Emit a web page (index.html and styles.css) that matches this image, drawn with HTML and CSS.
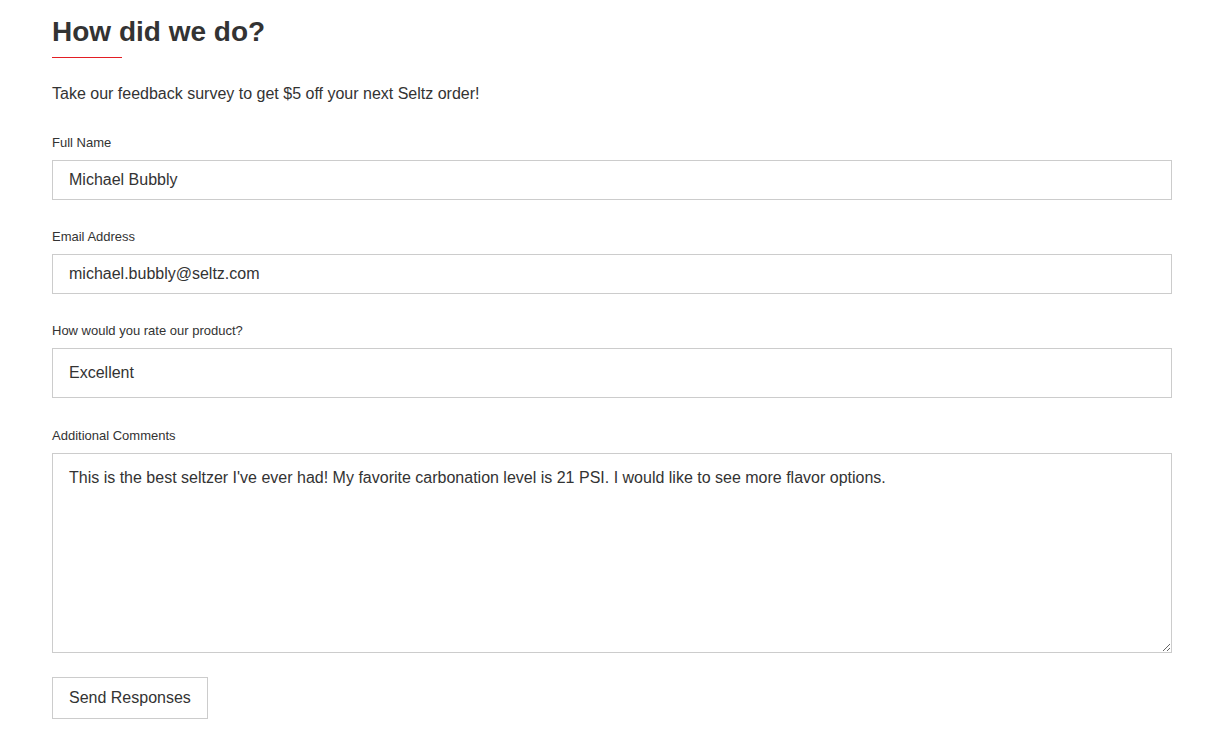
FILE: index.html
```html
<!DOCTYPE html>
<html lang="en">
<head>
<meta charset="utf-8">
<title>How did we do?</title>
<link rel="stylesheet" href="styles.css">
</head>
<body>
<main class="page">
  <h1 class="title">How did we do?</h1>
  <div class="rule"></div>
  <p class="intro">Take our feedback survey to get $5 off your next Seltz order!</p>
  <form class="form">
    <label class="label" for="name">Full Name</label>
    <input class="field" id="name" type="text" value="Michael Bubbly">
    <label class="label" for="email">Email Address</label>
    <input class="field" id="email" type="text" value="michael.bubbly@seltz.com">
    <label class="label" for="rate">How would you rate our product?</label>
    <div class="field field-select" id="rate">Excellent</div>
    <label class="label" for="comments">Additional Comments</label>
    <textarea class="field field-area" id="comments">This is the best seltzer I've ever had! My favorite carbonation level is 21 PSI. I would like to see more flavor options.</textarea>
    <button class="button" type="button">Send Responses</button>
  </form>
</main>
</body>
</html>
```
FILE: styles.css
```css
* { box-sizing: border-box; }
html, body { margin: 0; background: #fff; }
body {
  font-family: "Liberation Sans", Arial, sans-serif;
  color: #333;
}
.page {
  width: 1120px;
  margin-left: 52px;
  padding-top: 16px;
}
.title {
  margin: 0;
  font-size: 28px;
  line-height: 32px;
  font-weight: bold;
  color: #333;
}
.rule {
  width: 70px;
  height: 1px;
  background: #e31e24;
  margin-top: 9px;
}
.intro {
  margin: 27px 0 0;
  font-size: 16px;
  line-height: 18px;
}
.form {
  display: flex;
  flex-direction: column;
  align-items: flex-start;
}
.label {
  display: block;
  font-size: 13px;
  line-height: 14px;
  margin-top: 30px;
  margin-bottom: 10px;
}
.intro + .form .label:first-child { margin-top: 33px; }
.field {
  display: block;
  width: 100%;
  height: 40px;
  margin: 0;
  padding: 0 16px;
  border: 1px solid #ccc;
  border-radius: 0;
  background: #fff;
  font-family: "Liberation Sans", Arial, sans-serif;
  font-size: 16px;
  color: #333;
  outline: none;
}
.field-select {
  height: 50px;
  display: flex;
  align-items: center;
}
.field-area {
  height: 200px;
  padding: 14px 16px;
  line-height: 20px;
  resize: vertical;
}
.form .label:nth-of-type(4) { margin-top: 31px; }
.button {
  margin-top: 24px;
  height: 42px;
  padding: 0 16px;
  border: 1px solid #ccc;
  border-radius: 0;
  background: #fff;
  font-family: "Liberation Sans", Arial, sans-serif;
  font-size: 16px;
  color: #333;
}
```
